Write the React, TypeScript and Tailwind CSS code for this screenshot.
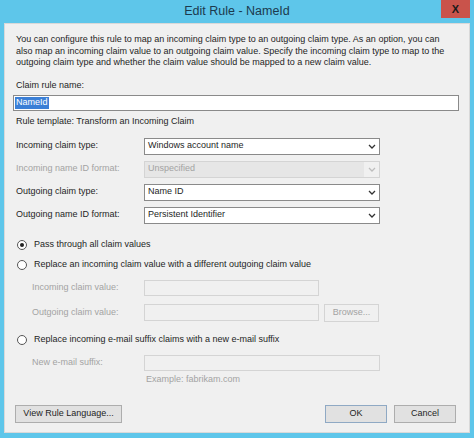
import type { ReactNode } from "react";

const font = { fontFamily: '"Liberation Sans", Arial, sans-serif' };

function Chevron({ disabled }: { disabled?: boolean }) {
  return (
    <svg width="8" height="5" viewBox="0 0 8 5" className="shrink-0">
      <path
        d="M1 1 L4 4 L7 1"
        fill="none"
        stroke={disabled ? "#bdbdbd" : "#333"}
        strokeWidth="1.3"
      />
    </svg>
  );
}

function Select({ value, disabled }: { value: string; disabled?: boolean }) {
  return (
    <div
      className={
        disabled
          ? "flex h-[17px] w-[236px] items-center border border-[#d4d4d4] bg-[#f0f0f0]"
          : "flex h-[17px] w-[236px] items-center border border-[#8a8a8a] bg-white"
      }
    >
      <div
        className={
          disabled
            ? "flex h-full flex-1 items-center bg-[#e6e6e6] pl-[3px] text-[#a3a3a3]"
            : "flex h-full flex-1 items-center pl-[3px] text-[#1e1e1e]"
        }
      >
        {value}
      </div>
      <div className="flex w-[15px] justify-center">
        <Chevron disabled={disabled} />
      </div>
    </div>
  );
}

function Row({ label, disabled, children }: { label: string; disabled?: boolean; children: ReactNode }) {
  return (
    <div className="flex items-center">
      <div className={disabled ? "w-[128px] text-[#a3a3a3]" : "w-[128px] text-[#1e1e1e]"}>{label}</div>
      {children}
    </div>
  );
}

function Radio({ checked, label }: { checked?: boolean; label: string }) {
  return (
    <div className="flex h-[12px] items-center gap-[7px] pl-[1px]">
      <div className="flex size-[10px] items-center justify-center rounded-full border border-[#555] bg-white">
        {checked ? <div className="size-[4px] rounded-full bg-[#222]" /> : null}
      </div>
      <span className="text-[#1e1e1e]">{label}</span>
    </div>
  );
}

function Button({ children, className }: { children: ReactNode; className: string }) {
  return (
    <div
      className={
        "flex h-[18px] items-center justify-center border bg-[#e1e1e1] text-[#1e1e1e] " + className
      }
    >
      {children}
    </div>
  );
}

export default function App() {
  return (
    <div className="flex h-[438px] w-[474px] flex-col overflow-hidden bg-[#5ec6ea]" style={font}>
      <div className="relative flex h-[23px] items-center justify-center">
        <span className="text-[12.5px] text-[#1c3a4e]">Edit Rule - NameId</span>
        <div className="absolute right-[4px] top-0 flex h-[18px] w-[29px] items-center justify-center bg-[#c9534b] text-[11px] font-bold text-[#1a1a1a]">
          X
        </div>
      </div>

      <div className="mx-[4px] mb-[5px] flex flex-1 flex-col border border-[#d9d9d9] bg-[#f0f0f0] pl-[11px] pr-[9px] pt-[10px] text-[9px] leading-[11.5px]">
        <p className="text-[#1e1e1e]">
          You can configure this rule to map an incoming claim type to an outgoing claim type. As an option, you can
          <br />
          also map an incoming claim value to an outgoing claim value. Specify the incoming claim type to map to the
          <br />
          outgoing claim type and whether the claim value should be mapped to a new claim value.
        </p>

        <div className="mt-[11px] text-[#1e1e1e]">Claim rule name:</div>
        <div className="-ml-[3px] mt-[4px] flex h-[16px] w-[446px] items-center border border-[#8a8a8a] bg-white pl-[1px]">
          <span className="bg-[#3b7fd6] px-[1px] text-white">NameId</span>
        </div>

        <div className="mt-[5px] text-[#1e1e1e]">Rule template: Transform an Incoming Claim</div>

        <div className="mt-[10px] flex flex-col gap-[6px]">
          <Row label="Incoming claim type:">
            <Select value="Windows account name" />
          </Row>
          <Row label="Incoming name ID format:" disabled>
            <Select value="Unspecified" disabled />
          </Row>
          <Row label="Outgoing claim type:">
            <Select value="Name ID" />
          </Row>
          <Row label="Outgoing name ID format:">
            <Select value="Persistent Identifier" />
          </Row>
        </div>

        <div className="mt-[15px]">
          <Radio checked label="Pass through all claim values" />
        </div>
        <div className="mt-[8px]">
          <Radio label="Replace an incoming claim value with a different outgoing claim value" />
        </div>

        <div className="mt-[9px] flex items-center">
          <div className="w-[128px] pl-[16px] text-[#a3a3a3]">Incoming claim value:</div>
          <div className="h-[16px] w-[175px] border border-[#d4d4d4] bg-[#f0f0f0]" />
        </div>
        <div className="mt-[8px] flex items-center">
          <div className="w-[128px] pl-[16px] text-[#a3a3a3]">Outgoing claim value:</div>
          <div className="h-[17px] w-[175px] border border-[#d4d4d4] bg-[#f0f0f0]" />
          <div className="ml-[5px] flex h-[18px] w-[55px] items-center justify-center border border-[#d4d4d4] bg-[#f0f0f0] text-[#a3a3a3]">
            Browse...
          </div>
        </div>

        <div className="mt-[12px]">
          <Radio label="Replace incoming e-mail suffix claims with a new e-mail suffix" />
        </div>
        <div className="mt-[9px] flex items-center">
          <div className="w-[128px] pl-[16px] text-[#a3a3a3]">New e-mail suffix:</div>
          <div className="h-[16px] w-[236px] border border-[#d4d4d4] bg-[#f0f0f0]" />
        </div>
        <div className="ml-[130px] mt-[3px] text-[#a3a3a3]">Example: fabrikam.com</div>

        <div className="mt-[20px] flex items-center">
          <Button className="-ml-[1px] w-[107px] border-[#adadad]">View Rule Language...</Button>
          <div className="flex-1" />
          <Button className="w-[62px] border-[#8fa9c4]">OK</Button>
          <Button className="ml-[7px] mr-[4px] w-[62px] border-[#adadad]">Cancel</Button>
        </div>
      </div>
    </div>
  );
}
